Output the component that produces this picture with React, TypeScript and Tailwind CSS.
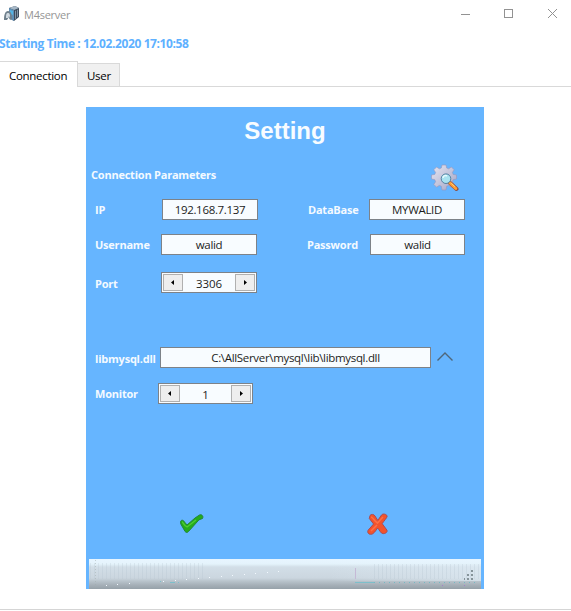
import React from "react";

type BoxProps = { children: React.ReactNode; className: string };

function Label({ children, className }: BoxProps) {
  return (
    <span className={`block shrink-0 whitespace-nowrap text-[11px] leading-[21px] font-bold tracking-[-0.22px] text-[#f4faff] ${className}`}>
      {children}
    </span>
  );
}

function Field({ children, className }: BoxProps) {
  return (
    <div className={`h-[21px] shrink-0 whitespace-nowrap border border-[#7d8288] bg-[#f8fcff] text-center text-[11.5px] leading-[20px] tracking-[-0.32px] text-[#1c1c1c] ${className}`}>
      {children}
    </div>
  );
}

function Arrow({ left = false }: { left?: boolean }) {
  return (
    <button className={`flex h-[17px] w-5 items-center justify-center border border-[#b0b0b0] bg-[#eeeeee] ${left ? "pr-px" : "pl-px"}`}>
      <svg width="3" height="5" viewBox="0 0 3 5" fill="#000">
        <path d={left ? "M3 0v5L0 2.500z" : "M0 0v5l3-2.500z"} />
      </svg>
    </button>
  );
}

function Spinner({ children, className }: BoxProps) {
  return (
    <div className={`flex h-[21px] shrink-0 items-center justify-between border border-[#7d8288] bg-[#f8fcff] px-px text-[11.5px] tracking-[-0.1px] text-[#1c1c1c] ${className}`}>
      <Arrow left />
      <span className="pt-px leading-[19px]">{children}</span>
      <Arrow />
    </div>
  );
}

function ServerIcon() {
  return (
    <svg width="16" height="16" viewBox="0 0 16 16">
      <path d="M5 2l6-2 4 2v9l-5 4-5-3z" fill="#3c4c5c" />
      <path d="M5 2l6-2 4 2-5 2z" fill="#a7b8c7" />
      <path d="M5 2l5 2v11l-5-3z" fill="#5f8fb5" />
      <path d="M6 4l3 1v4L6 8z" fill="#54b4e4" />
      <path d="M11 5l1-.5v8l-1 .8zM13 4l1-.5v7l-1 .8z" fill="#8394a5" />
      <path d="M0 14c0-5 1-9 4-9s4 3 4 8l-2 1-1-3-2 3z" fill="#70818d" />
      <path d="M2 12c0-3 0-5 2-5s2 2 2 5l-1-2-1 2z" fill="#d2dbe2" />
    </svg>
  );
}

function GearIcon() {
  return (
    <svg width="28" height="28" viewBox="0 0 28 28">
      <defs>
        <linearGradient id="gear" x1="0" y1="0" x2="1" y2="1">
          <stop stopColor="#e6e6f2" />
          <stop offset="1" stopColor="#a3a5c6" />
        </linearGradient>
      </defs>
      <path
        d="M11 1h4l.7 3 2 .8L20.4 3l2.8 2.800-1.800 2.600.8 2L25.500 11v4l-3.300.7-.8 2 1.800 2.700-2.800 2.800-2.700-1.800-2 .8L15 26h-4l-.7-3.800-2-.8-2.700 1.800-2.800-2.800 1.800-2.700-.8-2L.5 15v-4l3.300-.6.8-2-1.800-2.600L5.600 3l2.700 1.800 2-.8z"
        fill="url(#gear)"
        stroke="#9896ba"
        strokeWidth=".6"
      />
      <path d="M18 18l7.500 7" stroke="#8b5147" strokeWidth="4" strokeLinecap="round" />
      <path d="M18.500 18.500l6.300 6" stroke="#ff9d35" strokeWidth="2.900" strokeLinecap="round" />
      <path d="M20.300 19.300l3.500 3.300" stroke="#ffd47a" strokeWidth="1" />
      <circle cx="15" cy="14.700" r="4.800" fill="#a9e2f0" stroke="#5582a3" strokeWidth="1" />
      <path d="M12 14c0-2 2-3 4-2" fill="none" stroke="#e6fbff" strokeWidth="1.500" />
    </svg>
  );
}

function CheckIcon() {
  return (
    <svg width="26" height="20" viewBox="0 0 26 20">
      <path d="M1.500 7.500c1-2 3-1.500 4 .5L8 11l8-7 4.500-3c2-1 4.300 1 3 3.500l-3.500 1.300L9.500 17.500c-1.200 1.300-2.300 1.200-3.400 0L1.800 10z" fill="#24ac1b" stroke="#23843c" strokeWidth="1" />
      <path d="M3 8c1 0 2 4 5 5l9-7" fill="none" stroke="#4fcb34" strokeWidth="1.300" />
    </svg>
  );
}

function CancelIcon() {
  return (
    <svg width="23" height="23" viewBox="0 0 23 23">
      <path d="M4 2.500c1-1.500 4-1.500 5 .5l2.800 4.400L15.500 2c1.400-1.700 4.800-1 5.700 1-.1 2-3.600 5.100-5 7.700l4.700 6.400c1 2-1.500 3.800-4 3.500-2 0-3.500-3.700-5.300-5.600-2 2.800-4 6.500-7 6.300-2.400 0-3.700-2.400-2.300-4.300L7.600 11 3.300 5.500z" fill="#f2532c" stroke="#a94d55" strokeWidth="1" />
      <path d="M5 4c2 0 3 4 6.500 6L17 4M5 18l6-6" fill="none" stroke="#fb7048" strokeWidth="1.500" />
    </svg>
  );
}

function StatusBar() {
  return (
    <footer className="mx-[3px] flex h-[30px] justify-end bg-[linear-gradient(to_bottom,#e8f5ff_0px,#e4f3fb_5px,#d2dee7_8px,#cbd6df_19px,#b9c4cc_22px,#a6b0b8_26px,#96a1a9_30px)]">
      <svg width="392" height="30" viewBox="0 0 392 30" shapeRendering="crispEdges">
        <defs>
          <pattern id="stripes" width="4" height="30" patternUnits="userSpaceOnUse">
            <path d="M1.500 4v16" stroke="#afbfcb" strokeOpacity=".25" />
          </pattern>
          <linearGradient id="shine">
            <stop stopColor="#e0edf6" stopOpacity="0" />
            <stop offset="1" stopColor="#e0edf6" stopOpacity=".6" />
          </linearGradient>
        </defs>
        <path fill="url(#stripes)" d="M0 0h116v23H0z" />
        <path fill="url(#shine)" d="M240 5h152v17H240z" />
        <path fill="url(#stripes)" d="M285 5h107v20H285z" />
        <path d="M266 23.500h19" stroke="#7cbfcb" />
        <path d="M285 23.500h105" stroke="#75b9c4" strokeDasharray="1 4" />
        <path d="M266.500 9v11" stroke="#c5b9d6" />
        <path d="M6.500 1v28" stroke="#a0aca9" strokeOpacity=".5" strokeDasharray="1 2" />
        <path d="M17 26.500h1M28 25.500h1M40 24.500h1M74 22.500h1M86 21.500h1M97 20.500h1M109 19.500h1M120 18.500h1M132 17.500h1M143 16.500h1M155 15.500h1M166 14.500h1M178 13.500h1M189 12.500h1" stroke="#f4faff" />
        <path d="M71 22.500h1M81 23.500h5M89 23.500h1" stroke="#7cbfcb" />
        <path d="M382 11h2v2h-2zM378 15h2v2h-2zM382 15h2v2h-2zM375 19h1v2h-1zM378 19h2v2h-2zM382 19h2v2h-2z" fill="#86949a" />
        <path d="M353 26.500h1M375 26.500h1" stroke="#a580cc" />
      </svg>
    </footer>
  );
}

export default function App() {
  return (
    <div className="flex h-[611px] w-[571px] flex-col overflow-hidden bg-white font-['Open_Sans','Noto_Sans',sans-serif]">
      <header className="flex h-[29px] shrink-0 pl-1 pt-[6px]">
        <ServerIcon />
        <span className="ml-[4px] text-[11px] leading-[17px] tracking-[-0.25px] text-[#969696]">M4server</span>
        <svg className="ml-auto mr-[13px] mt-[2px]" width="98" height="12" viewBox="0 0 98 12" fill="none" stroke="#929292" shapeRendering="crispEdges">
          <path d="M1 6.500h9M44.500 1.500h8v8h-8z" />
          <path d="M88 1l9 9m0-9l-9 9" shapeRendering="auto" />
        </svg>
      </header>

      <div className="-ml-px h-8 shrink-0 whitespace-nowrap text-[12px] leading-[30px] font-bold tracking-[-0.39px] text-[#5eb1ff]">
        Starting Time : 12.02.2020 17:10:58
      </div>

      <nav className="flex h-[26px] shrink-0 items-end border-b border-[#d9d9d9] text-[11.5px] tracking-[-0.3px] text-black">
        <div className="-mb-px h-[26px] w-[78px] border-r border-t border-[#d9d9d9] bg-white pl-[9px] leading-[27px]">Connection</div>
        <div className="h-[23px] w-[42px] border-r border-t border-[#d9d9d9] bg-[#f0f0f0] pl-[9px] leading-[23px]">User</div>
      </nav>

      <main className="ml-[86px] mt-5 flex h-[482px] w-[398px] shrink-0 flex-col bg-[#66b5ff]">
        <h1 className="h-[54px] shrink-0 pt-[9px] text-center font-['Liberation_Sans',sans-serif] text-[24px] leading-[30px] font-bold text-[#f8fcff]">Setting</h1>
        <div className="flex h-[38px] shrink-0 pl-[5px]">
          <Label className="w-[340px] pt-[3px]">Connection Parameters</Label>
          <div className="pt-[3px]"><GearIcon /></div>
        </div>
        <div className="flex h-[35px] shrink-0 pl-[9px]">
          <Label className="w-[67px]">IP</Label>
          <Field className="w-24">192.168.7.137</Field>
          <Label className="ml-[50px] w-[61px]">DataBase</Label>
          <Field className="w-24">MYWALID</Field>
        </div>
        <div className="flex h-[38px] shrink-0 pl-[9px]">
          <Label className="w-[66px]">Username</Label>
          <Field className="w-24">walid</Field>
          <Label className="ml-[50px] w-[63px]">Password</Label>
          <Field className="w-[95px]">walid</Field>
        </div>
        <div className="flex h-[75px] shrink-0 pl-[9px]">
          <Label className="w-[66px] pt-px">Port</Label>
          <Spinner className="w-24">3306</Spinner>
        </div>
        <div className="flex h-9 shrink-0 pl-[9px]">
          <Label className="w-[65px] pt-px">libmysql.dll</Label>
          <Field className="w-[271px]">C:\AllServer\mysql\lib\libmysql.dll</Field>
          <svg className="ml-[6px] mt-[4px]" width="16" height="11" viewBox="0 0 16 11" fill="none">
            <path d="M.5 9.500L8 2l7.500 7.500" stroke="#4f6679" strokeWidth="1.400" />
          </svg>
        </div>
        <div className="flex h-[130px] shrink-0 pl-[9px]">
          <Label className="w-[63px]">Monitor</Label>
          <Spinner className="w-[95px]">1</Spinner>
        </div>
        <div className="flex h-[46px] shrink-0 items-start pl-[93px]">
          <div className="w-[187px] pt-px"><CheckIcon /></div>
          <CancelIcon />
        </div>
        <StatusBar />
      </main>
      <div className="mt-5 h-px shrink-0 bg-[#d5d5d5]" />
    </div>
  );
}
